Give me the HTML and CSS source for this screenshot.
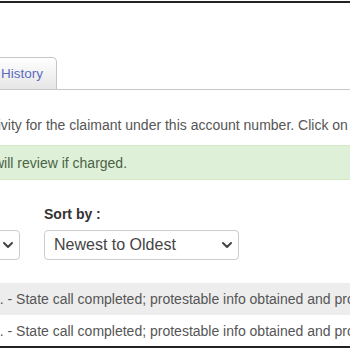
FILE: index.html
```html
<!DOCTYPE html>
<html lang="en">
<head>
<meta charset="utf-8">
<title>Claim History</title>
<link rel="stylesheet" href="styles.css">
</head>
<body>
<div class="frame">
  <div class="page">
    <div class="tabs">
      <div class="tab">History</div>
    </div>
    <p class="intro">activity for the claimant under this account number. Click on a row to view the details of each item.</p>
    <div class="alert">will review if charged.</div>
    <div class="filters">
      <div class="field field-narrow">
        <div class="select">
          <span class="select-value"></span>
          <svg class="chevron" width="10" height="10" viewBox="0 0 10 10" aria-hidden="true"><polyline points="1,3 5,7 9,3" fill="none" stroke="#444" stroke-width="2" stroke-linecap="round" stroke-linejoin="round"/></svg>
        </div>
      </div>
      <div class="field field-sort">
        <label class="label">Sort by :</label>
        <div class="select">
          <span class="select-value">Newest to Oldest</span>
          <svg class="chevron" width="10" height="10" viewBox="0 0 10 10" aria-hidden="true"><polyline points="1,3 5,7 9,3" fill="none" stroke="#444" stroke-width="2" stroke-linecap="round" stroke-linejoin="round"/></svg>
        </div>
      </div>
    </div>
    <div class="rows">
      <div class="row row-alt">1. - State call completed; protestable info obtained and protest filed.</div>
      <div class="row">1. - State call completed; protestable info obtained and protest filed.</div>
    </div>
  </div>
</div>
</body>
</html>
```

FILE: styles.css
```css
html, body {
  margin: 0;
  padding: 0;
  background: #fff;
  overflow: hidden;
}

body {
  width: 350px;
  height: 350px;
  font-family: "Liberation Sans", Arial, sans-serif;
  font-size: 14px;
  color: #555;
}

.frame {
  margin-top: 1px;
  height: 343px;
  border-top: 2px solid #222;
  border-bottom: 2px solid #222;
  overflow: hidden;
}

.page {
  margin-left: -21px;
  width: 1000px;
}

.tabs {
  display: flex;
  padding-top: 54px;
  border-bottom: 1px solid #c8c8c8;
}

.tab {
  height: 31px;
  line-height: 31px;
  padding: 0 13px 0 21px;
  border: 1px solid #c5c5c5;
  border-bottom: 0;
  border-radius: 0 5px 0 0;
  background: linear-gradient(#ffffff, #e6e6e6);
  font-size: 13.5px;
  color: #5b6cc2;
}

.intro {
  margin: 25px 0 0;
  line-height: 20px;
  white-space: nowrap;
}

.alert {
  margin-top: 10px;
  padding: 7px 14px 6px;
  line-height: 20px;
  background: #dff0d8;
  border: 1px solid #d6e9c6;
  color: #4a6346;
}

.filters {
  display: flex;
  align-items: flex-end;
  gap: 24px;
  margin-top: 24px;
}

.field {
  display: flex;
  flex-direction: column;
}

.field-narrow {
  width: 41px;
}

.field-sort {
  width: 195px;
}

.label {
  font-weight: bold;
  color: #333;
  line-height: 20px;
  margin-bottom: 6px;
}

.select {
  box-sizing: border-box;
  height: 30px;
  display: flex;
  align-items: center;
  justify-content: space-between;
  padding: 0 6px 0 9px;
  border: 1px solid #ccc;
  border-radius: 4px;
  background: #fff;
  font-size: 16px;
  color: #444;
}

.chevron {
  display: block;
  flex: none;
}

.rows {
  margin-top: 23px;
}

.row {
  height: 32px;
  line-height: 32px;
  padding-left: 13px;
  white-space: nowrap;
}

.row-alt {
  background: #ededed;
}
```
